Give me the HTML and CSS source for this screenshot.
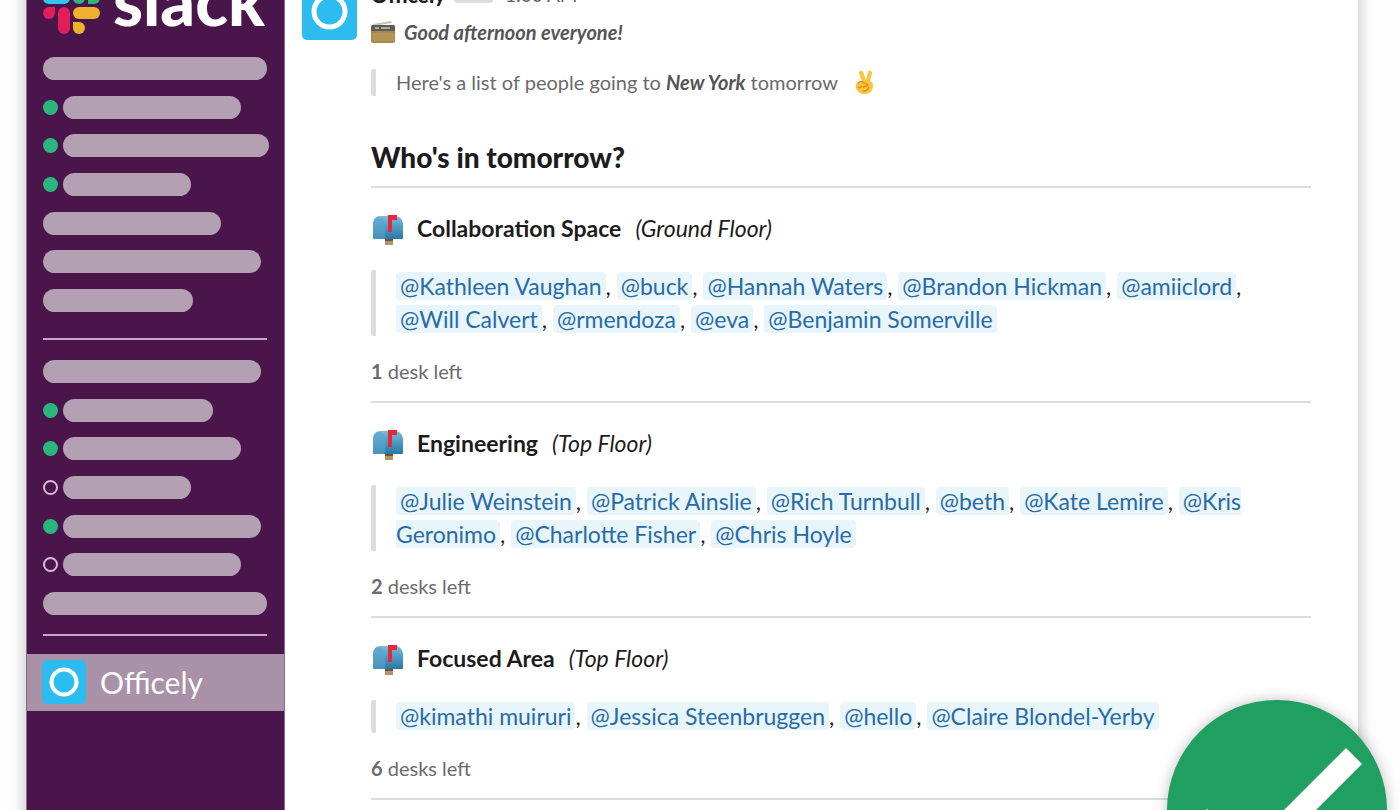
FILE: index.html
```html
<!DOCTYPE html>
<html lang="en">
<head>
<meta charset="utf-8">
<title>Officely in Slack</title>
<link rel="stylesheet" href="styles.css">
</head>
<body>
<svg class="defs" aria-hidden="true">
  <defs>
    <linearGradient id="box-blue" x1="0" y1="0" x2="0" y2="1">
      <stop offset="0" stop-color="#7cbcd8"/><stop offset="0.5" stop-color="#4b9ac4"/><stop offset="1" stop-color="#2f75a2"/>
    </linearGradient>
    <symbol id="mailbox" viewBox="0 0 32 34">
      <path d="M13 26h8v8h-8z" fill="#b3946a"/>
      <path d="M13 28h8v2h-8z" fill="#6d5537"/>
      <path d="M1 27V14C1 8 4 5 8 5h15c5 0 8 4 8 9v13q0 1-1 1H2q-1 0-1-1z" fill="url(#box-blue)"/>
      <path d="M1 27V14C1 8 4 6 7 6s6 2 6 8v14H2q-1 0-1-1z" fill="#5aa6cd" opacity="0.6"/>
      <path d="M16 4h9v5h-5v12h-4z" fill="#e3283c"/>
    </symbol>
  </defs>
</svg>
<div class="window">
  <aside class="sidebar">
    <div class="brand">
      <svg class="brand-mark" viewBox="0 0 58 58" aria-hidden="true">
        <g fill="#36c5f0"><rect x="0" y="15" width="27" height="12" rx="6"/><path d="M21 0a6 6 0 0 1 6 6v6h-6a6 6 0 0 1 0-12z"/></g>
        <g fill="#2eb67d"><rect x="30" y="0" width="12" height="27" rx="6"/><path d="M57 21a6 6 0 0 1-6 6h-6v-6a6 6 0 0 1 12 0z"/></g>
        <g fill="#ecb22e"><rect x="30" y="30" width="27" height="12" rx="6"/><path d="M36 57a6 6 0 0 1-6-6v-6h6a6 6 0 0 1 0 12z"/></g>
        <g fill="#e01e5a"><rect x="15" y="30" width="12" height="27" rx="6"/><path d="M0 36a6 6 0 0 1 6-6h6v6a6 6 0 0 1-12 0z"/></g>
      </svg>
      <span class="brand-name">slack</span>
    </div>
    <ul class="channels">
      <li><i class="bar w-224"></i></li>
      <li><i class="dot"></i><i class="bar w-178"></i></li>
      <li><i class="dot"></i><i class="bar w-206"></i></li>
      <li><i class="dot"></i><i class="bar w-128"></i></li>
      <li><i class="bar w-178"></i></li>
      <li><i class="bar w-218"></i></li>
      <li><i class="bar w-150"></i></li>
    </ul>
    <hr class="side-rule">
    <ul class="channels">
      <li><i class="bar w-218"></i></li>
      <li><i class="dot"></i><i class="bar w-150"></i></li>
      <li><i class="dot"></i><i class="bar w-178"></i></li>
      <li><i class="dot away"></i><i class="bar w-128"></i></li>
      <li><i class="dot"></i><i class="bar w-198"></i></li>
      <li><i class="dot away"></i><i class="bar w-178"></i></li>
      <li><i class="bar w-224"></i></li>
    </ul>
    <hr class="side-rule">
    <a class="app-link" href="#officely">
      <svg class="app-icon" viewBox="0 0 44 44" aria-hidden="true"><rect width="44" height="44" rx="5" fill="#2cbcf0"/><circle cx="22" cy="22" r="12.5" fill="none" stroke="#fff" stroke-width="4"/></svg>
      <span>Officely</span>
    </a>
  </aside>
  <main class="message" id="officely">
    <svg class="avatar" viewBox="0 0 55 55" aria-hidden="true"><rect width="55" height="55" rx="5" fill="#2cbcf0"/><circle cx="27.5" cy="26.5" r="15.5" fill="none" stroke="#fff" stroke-width="5"/></svg>
    <div class="content">
      <header class="byline"><b class="sender">Officely</b><span class="tag">APP</span><time>1:00 AM</time></header>
      <p class="greeting">
        <svg class="radio" viewBox="0 0 24 22" aria-hidden="true"><path d="M2 3 20 0l1 2-18 3z" fill="#c9c5b4"/><rect y="4" width="24" height="18" rx="2" fill="#a8894d"/><path d="M0 6q0-2 2-2h20q2 0 2 2v4H0z" fill="#5d5b55"/><path d="M4 6h4v2H4zm6 0h9v2h-9z" fill="#a9a9a2"/><path d="M1 12h22v8H1z" fill="#b3955a"/></svg>
        <b><em>Good afternoon everyone!</em></b>
      </p>
      <blockquote class="intro">Here's a list of people going to <b><em>New York</em></b> tomorrow
        <svg class="victory" viewBox="0 0 20 24" aria-hidden="true"><path d="M5 1q2-1 3 1l3 8 2-8q1-2 3-1 1 1 1 2l-2 8q3 1 3 5 0 7-8 8-7 0-9-6-1-4 2-6l4-1-3-8q0-2 1-2z" fill="#fcc43c"/><path d="M3 13q4-3 6 0l3 1q2 1 0 2l-4 1m-5 0q2 2 4-1m1 5q4 1 6-4" fill="none" stroke="#d98a1c" stroke-width="1.3"/></svg>
      </blockquote>
      <h1>Who's in tomorrow?</h1>
      <section class="area">
        <h2><svg class="mailbox" aria-hidden="true"><use href="#mailbox"/></svg>Collaboration Space <em>(Ground Floor)</em></h2>
        <blockquote class="people"><a href="#u">@Kathleen Vaughan</a>, <a href="#u">@buck</a>, <a href="#u">@Hannah Waters</a>, <a href="#u">@Brandon Hickman</a>, <a href="#u">@amiiclord</a>, <a href="#u">@Will Calvert</a>, <a href="#u">@rmendoza</a>, <a href="#u">@eva</a>, <a href="#u">@Benjamin Somerville</a></blockquote>
        <p class="desks"><b>1</b> desk left</p>
      </section>
      <section class="area">
        <h2><svg class="mailbox" aria-hidden="true"><use href="#mailbox"/></svg>Engineering <em>(Top Floor)</em></h2>
        <blockquote class="people"><a href="#u">@Julie Weinstein</a>, <a href="#u">@Patrick Ainslie</a>, <a href="#u">@Rich Turnbull</a>, <a href="#u">@beth</a>, <a href="#u">@Kate Lemire</a>, <a href="#u">@Kris Geronimo</a>, <a href="#u">@Charlotte Fisher</a>, <a href="#u">@Chris Hoyle</a></blockquote>
        <p class="desks"><b>2</b> desks left</p>
      </section>
      <section class="area">
        <h2><svg class="mailbox" aria-hidden="true"><use href="#mailbox"/></svg>Focused Area <em>(Top Floor)</em></h2>
        <blockquote class="people"><a href="#u">@kimathi muiruri</a>, <a href="#u">@Jessica Steenbruggen</a>, <a href="#u">@hello</a>, <a href="#u">@Claire Blondel-Yerby</a></blockquote>
        <p class="desks"><b>6</b> desks left</p>
      </section>
    </div>
  </main>
</div>
<div class="done-badge">
  <svg viewBox="0 0 220 220" aria-hidden="true"><path d="M179 48 195 64 89 170 25 125 40 109 88 139z" fill="#fff"/></svg>
</div>
</body>
</html>
```
FILE: styles.css
```css
* { box-sizing: border-box; }
body {
  margin: 0;
  height: 100vh;
  overflow: hidden;
  background: #fefefe;
  color: #1d1c1d;
  font-family: Lato, "Liberation Sans", sans-serif;
}
.defs { position: absolute; width: 0; height: 0; }
.window {
  display: flex;
  min-height: calc(100vh + 80px);
  margin: -40px 42px 0 26px;
  background: #fff;
  box-shadow: 0 0 16px rgba(0, 0, 0, 0.25);
}
.sidebar {
  flex: 0 0 259px;
  padding-top: 17px;
  border: solid #8a6a8c;
  border-width: 0 1px;
  background: #4a154b;
}
.brand { display: flex; align-items: flex-start; gap: 12px; height: 58px; padding-left: 16px; }
.brand-mark { flex: none; width: 58px; height: 58px; }
.brand-name { color: #fff; font-size: 68px; font-weight: 900; line-height: 46px; }
.channels {
  display: flex;
  flex-direction: column;
  justify-content: space-between;
  height: 255px;
  margin: 22px 0 26px 16px;
  padding: 0;
  list-style: none;
}
.channels li { display: flex; align-items: center; gap: 5px; }
.bar { height: 23px; border-radius: 12px; background: #b3a0b3; }
.w-224 { width: 224px; }
.w-218 { width: 218px; }
.w-206 { width: 206px; }
.w-198 { width: 198px; }
.w-178 { width: 178px; }
.w-150 { width: 150px; }
.w-128 { width: 128px; }
.dot { width: 15px; height: 15px; border-radius: 50%; background: #2bb67d; }
.dot.away { border: 2px solid #d9b8dc; background: none; }
.side-rule { height: 2px; margin: 0 17px 0 16px; border: 0; background: #c9a6cb; }
.side-rule + .channels { margin: 20px 0 19px 16px; }
.app-link {
  display: flex;
  align-items: center;
  gap: 14px;
  height: 57px;
  margin-top: 18px;
  padding: 0 0 2px 15px;
  background: #a992a7;
  color: #fff;
  font-size: 30px;
  line-height: 36px;
  text-decoration: none;
}
.app-icon { width: 44px; height: 44px; }
.message { display: flex; flex: 1; align-items: flex-start; gap: 14px; padding: 25px 47px 0 17px; }
.avatar { flex: none; width: 55px; height: 55px; }
.content { flex: 1; }
.byline { display: flex; align-items: center; gap: 9px; height: 20px; font-size: 21px; line-height: 20px; }
.sender { font-weight: 900; }
.tag { padding: 0 8px; border-radius: 3px; background: #ddd; color: #616061; font-size: 12px; line-height: 16px; }
.byline time { margin-left: 3px; color: #616061; font-size: 19px; }
.greeting { display: flex; align-items: center; gap: 9px; margin: 15px 0 0; color: #555; font-size: 20px; line-height: 24px; }
.radio { width: 24px; height: 22px; }
blockquote { margin: 0; padding-left: 20px; border-left: 5px solid #ddd; border-radius: 2px; }
.intro { margin-top: 25px; color: #6b6b6b; font-size: 20px; line-height: 27px; }
.intro b { color: #555; }
.victory { width: 20px; height: 24px; margin-left: 12px; vertical-align: -4px; }
h1 { margin: 43px 0 0; padding-bottom: 11px; font-size: 28px; font-weight: 900; line-height: 36px; }
.area { padding-top: 23px; border-top: 2px solid #ddd; }
.area:last-child { border-bottom: 2px solid #ddd; }
h2 { display: flex; align-items: center; margin: 0; font-size: 23px; font-weight: 700; line-height: 34px; }
h2 em { margin-left: 14px; font-weight: 400; }
.mailbox { width: 32px; height: 34px; margin: 0 13px 0 1px; }
.people { margin-top: 25px; padding-right: 40px; font-size: 23px; line-height: 33px; }
.people a { padding: 0 4px; border-radius: 4px; background: #e8f5fa; color: #276ba8; text-decoration: none; }
.desks { margin: 22px 0 16px; color: #6b6b6b; font-size: 20px; line-height: 27px; }
.done-badge {
  position: fixed;
  right: 13px;
  bottom: -110px;
  width: 220px;
  height: 220px;
  border-radius: 50%;
  background: #1f9f60;
  box-shadow: 0 0 14px rgba(0, 0, 0, 0.25);
}
```
